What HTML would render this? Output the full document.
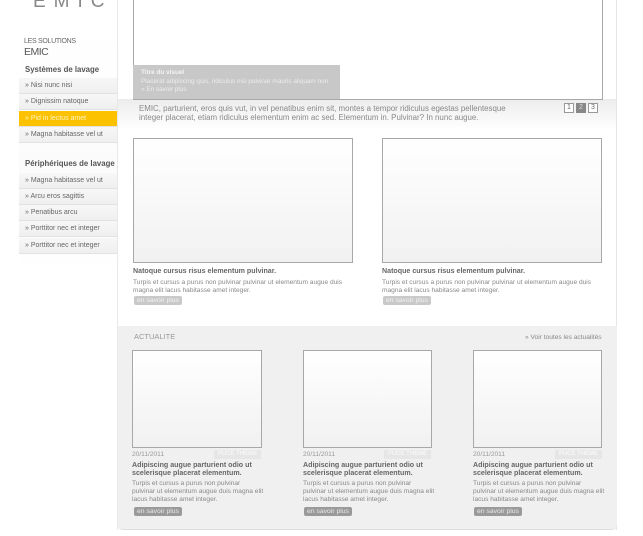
<!DOCTYPE html>
<html><head><meta charset="utf-8"><style>
*{margin:0;padding:0;box-sizing:border-box}
body{width:643px;height:536px;overflow:hidden;background:#fff;font-family:"Liberation Sans",Arial,sans-serif;position:relative;color:#777}
.a{position:absolute}
.logo{left:33px;top:-9px;font-size:19px;letter-spacing:8px;color:#888}
.side{left:19px;top:30px;width:98px;height:240px;background:linear-gradient(#fff,#fafafa 70%,#fff)}
.it{position:absolute;left:19px;width:98px;height:16px;font-size:7px;line-height:16px;padding-left:6px;color:#666;background:linear-gradient(#f7f7f7,#efefef);border-bottom:1px solid #e2e2e2}
.it.y{background:#fcc200;color:#fff3c0}
.hd{position:absolute;left:25px;font-size:7.8px;font-weight:bold;color:#555}
.main{left:117px;top:0;width:500px;height:530px;border-right:1px solid #e6e6e6;border-left:1px solid #e8e8e8}
.box{position:absolute;border:1px solid #a8a8a8;background:linear-gradient(#fff,#f1f1f1)}
.t{position:absolute;font-size:6.6px;line-height:8px;color:#888;white-space:nowrap}
.b{font-weight:bold;color:#666;font-size:7.1px}
.btn{position:absolute;height:9px;font-size:6.8px;line-height:9px;padding:0 3px;border-radius:2px;background:#c9c9c9;color:#f3f3f3}
.btn.d{background:#9a9a9a;color:#e8e8e8}
.tag{position:absolute;width:47px;height:9px;background:#e6e6e6;color:#f6f6f6;font-size:6px;line-height:9px;text-align:center;font-weight:bold}
.pg{position:absolute;top:103px;width:10px;height:10px;border:1px solid #999;font-size:7px;line-height:8px;text-align:center;color:#666;background:#fff}
</style></head><body>
<div class="a logo">EMIC</div>
<div class="a side"></div>
<div class="a" style="left:24px;top:38px;font-size:7px;color:#666;letter-spacing:-.3px">LES SOLUTIONS</div>
<div class="a" style="left:24px;top:46px;font-size:10.5px;color:#555;letter-spacing:-.5px">EMIC</div>
<div class="hd" style="top:65px">Systèmes de lavage</div>
<div class="it" style="top:78px">» Nisi nunc nisi</div>
<div class="it" style="top:94px">» Dignissim natoque</div>
<div class="it y" style="top:111px">» Pid in lectus amet</div>
<div class="it" style="top:127px">» Magna habitasse vel ut</div>
<div class="hd" style="top:159px">Périphériques de lavage</div>
<div class="it" style="top:173px">» Magna habitasse vel ut</div>
<div class="it" style="top:189px">» Arcu eros sagittis</div>
<div class="it" style="top:205px">» Penatibus arcu</div>
<div class="it" style="top:221px">» Porttitor nec et integer</div>
<div class="it" style="top:238px">» Porttitor nec et integer</div>

<div class="a main"></div>
<div class="a" style="left:118px;top:99px;width:498px;height:30px;background:linear-gradient(#ececec,#fff)"></div>
<div class="box" style="left:133px;top:-2px;width:470px;height:102px;background:#fff"></div>
<div class="a" style="left:133px;top:65px;width:207px;height:34px;background:#c8c8c8;padding:4px 8px;font-size:6.4px;line-height:8.5px;color:#ececec;white-space:nowrap"><b style="color:#f4f4f4">Titre du visuel</b><br>Placerat adipiscing quis, ridiculus nisi pulvinar mauris aliquam non<br>» En savoir plus</div>
<div class="t" style="left:139px;top:104px;font-size:7.9px;line-height:9px;color:#888">EMIC, parturient, eros quis vut, in vel penatibus enim sit, montes a tempor ridiculus egestas pellentesque<br>integer placerat, etiam ridiculus elementum enim ac sed. Elementum in. Pulvinar? In nunc augue.</div>
<div class="pg" style="left:564px">1</div>
<div class="pg" style="left:576px;background:#888;color:#ddd;border-color:#888">2</div>
<div class="pg" style="left:588px">3</div>

<div class="box" style="left:133px;top:138px;width:220px;height:125px"></div>
<div class="box" style="left:382px;top:138px;width:220px;height:125px"></div>
<div class="t b" style="left:133px;top:267px">Natoque cursus risus elementum pulvinar.</div>
<div class="t" style="left:133px;top:279px">Turpis et cursus a purus non pulvinar pulvinar ut elementum augue duis<br>magna elit lacus habitasse amet integer.</div>
<div class="btn" style="left:134px;top:296px">en savoir plus</div>
<div class="t b" style="left:382px;top:267px">Natoque cursus risus elementum pulvinar.</div>
<div class="t" style="left:382px;top:279px">Turpis et cursus a purus non pulvinar pulvinar ut elementum augue duis<br>magna elit lacus habitasse amet integer.</div>
<div class="btn" style="left:383px;top:296px">en savoir plus</div>

<div class="a" style="left:118px;top:326px;width:499px;height:204px;background:#f0f0f0;border-bottom:1px solid #ddd;border-radius:0 0 5px 5px"></div>
<div class="t" style="left:134px;top:333px;font-size:7.5px;color:#999">ACTUALITE</div>
<div class="t" style="left:525px;top:334px;color:#888">» Voir toutes les actualités</div>

<div class="box" style="left:132px;top:350px;width:130px;height:98px"></div>
<div class="box" style="left:303px;top:350px;width:129px;height:98px"></div>
<div class="box" style="left:473px;top:350px;width:129px;height:98px"></div>

<div class="t" style="left:132px;top:451px;color:#999">20/11/2011</div>
<div class="tag" style="left:214px;top:450px">PUCE THEME</div>
<div class="t b" style="left:132px;top:461px">Adipiscing augue parturient odio ut<br>scelerisque placerat elementum.</div>
<div class="t" style="left:132px;top:480px">Turpis et cursus a purus non pulvinar<br>pulvinar ut elementum augue duis magna elit<br>lacus habitasse amet integer.</div>
<div class="btn d" style="left:134px;top:507px">en savoir plus</div>

<div class="t" style="left:303px;top:451px;color:#999">20/11/2011</div>
<div class="tag" style="left:384px;top:450px">PUCE THEME</div>
<div class="t b" style="left:303px;top:461px">Adipiscing augue parturient odio ut<br>scelerisque placerat elementum.</div>
<div class="t" style="left:303px;top:480px">Turpis et cursus a purus non pulvinar<br>pulvinar ut elementum augue duis magna elit<br>lacus habitasse amet integer.</div>
<div class="btn d" style="left:304px;top:507px">en savoir plus</div>

<div class="t" style="left:473px;top:451px;color:#999">20/11/2011</div>
<div class="tag" style="left:555px;top:450px">PUCE THEME</div>
<div class="t b" style="left:473px;top:461px">Adipiscing augue parturient odio ut<br>scelerisque placerat elementum.</div>
<div class="t" style="left:473px;top:480px">Turpis et cursus a purus non pulvinar<br>pulvinar ut elementum augue duis magna elit<br>lacus habitasse amet integer.</div>
<div class="btn d" style="left:474px;top:507px">en savoir plus</div>
</body></html>
